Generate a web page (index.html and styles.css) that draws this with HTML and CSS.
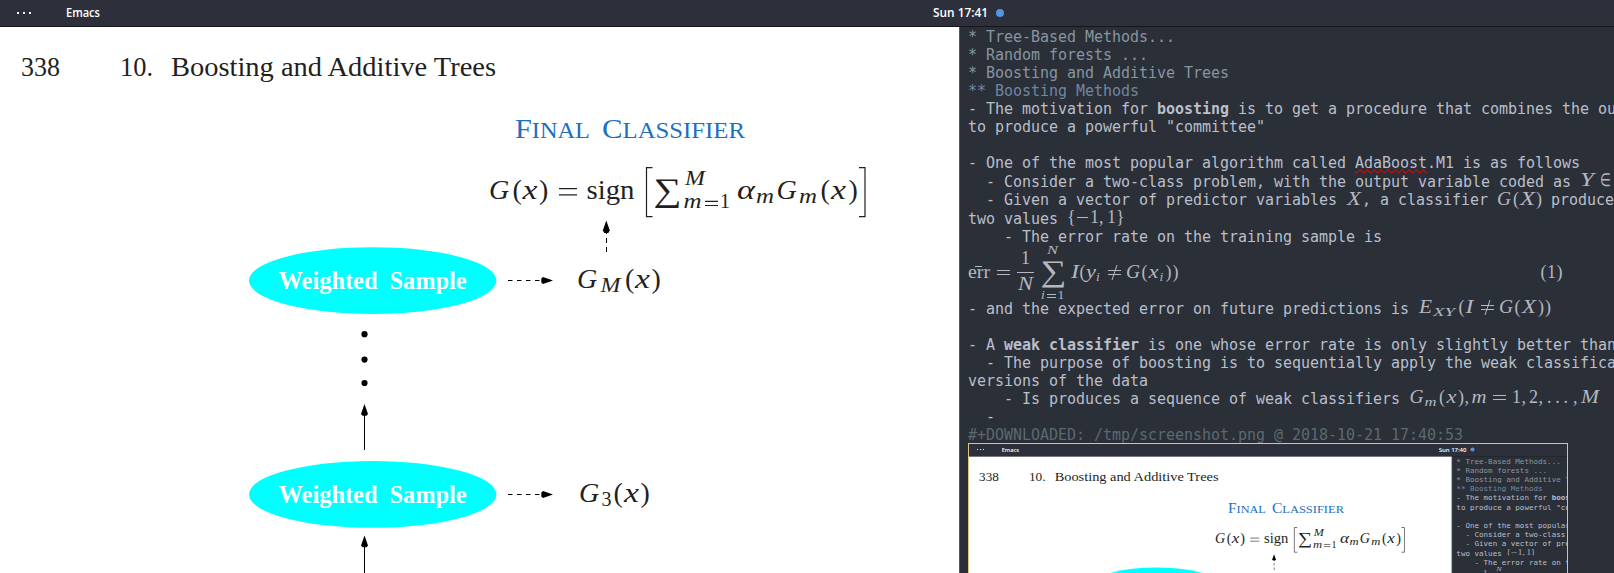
FILE: index.html
```html
<!DOCTYPE html>
<html lang="en">
<head>
<meta charset="utf-8">
<title>Emacs</title>
<link rel="stylesheet" href="styles.css">
</head>
<body>
<div class="screen" id="screen">
  <header class="topbar">
    <div class="topbar-left">
      <svg class="dots" width="15" height="2" viewBox="0 0 15 2"><path d="M0 0h2v2H0zM6 0h2v2H6zM12 0h2v2H12z"/></svg>
      <svg width="36" height="26"><text class="bar-text" x="0" y="17" textLength="34" lengthAdjust="spacingAndGlyphs">Emacs</text></svg>
    </div>
    <div class="clock">
      <svg width="56" height="26"><text class="bar-text" x="0" y="17" textLength="55" lengthAdjust="spacingAndGlyphs">Sun <tspan class="clock-time">17:41</tspan></text></svg>
      <span class="notify"></span>
    </div>
  </header>
  <main class="workspace">
    <section class="book">
      <svg class="figure" width="959" height="546" viewBox="0 27 959 546">
        <g class="run">
          <text x="21" y="75.900" textLength="39" lengthAdjust="spacingAndGlyphs">338</text>
          <text x="120" y="75.900" textLength="33" lengthAdjust="spacingAndGlyphs">10.</text>
          <text x="171" y="75.900" textLength="325" lengthAdjust="spacingAndGlyphs">Boosting and Additive Trees</text>
        </g>
        <g class="heading">
          <text x="515" y="138" textLength="75" lengthAdjust="spacingAndGlyphs">F<tspan class="sc">INAL</tspan></text>
          <text x="602" y="138" textLength="143" lengthAdjust="spacingAndGlyphs">C<tspan class="sc">LASSIFIER</tspan></text>
        </g>
        <g class="math">
          <text class="it" x="489" y="199">G</text><text x="512.500" y="199">(</text><text class="it" x="522.500" y="199" textLength="15" lengthAdjust="spacingAndGlyphs">x</text><text x="539" y="199">)</text>
          <path class="rule" d="M559 188.700h18M559 194.800h18"/>
          <text x="586.500" y="199" textLength="48" lengthAdjust="spacingAndGlyphs">sign</text>
          <path class="rule" d="M652.500 167.700h-6v49h6M859 167.700h6v49h-6"/>
          <text class="sum" x="653.500" y="200.500" textLength="28" lengthAdjust="spacingAndGlyphs">∑</text>
          <text class="it sub" x="685" y="185" textLength="20" lengthAdjust="spacingAndGlyphs">M</text>
          <text class="it sub" x="683.500" y="207.700" textLength="18" lengthAdjust="spacingAndGlyphs">m</text>
          <path class="rule" d="M705 201.300h13M705 205.500h13"/>
          <text class="sub" x="720" y="207.700">1</text>
          <text class="it" x="737" y="199" textLength="18" lengthAdjust="spacingAndGlyphs">α</text><text class="it sub" x="756" y="203" textLength="18" lengthAdjust="spacingAndGlyphs">m</text>
          <text class="it" x="776.500" y="199">G</text><text class="it sub" x="799" y="203" textLength="18" lengthAdjust="spacingAndGlyphs">m</text>
          <text x="820.500" y="199">(</text><text class="it" x="831" y="199" textLength="15" lengthAdjust="spacingAndGlyphs">x</text><text x="848.500" y="199">)</text>

          <text class="it" x="577" y="288">G</text><text class="it sub" x="600.500" y="292" textLength="20" lengthAdjust="spacingAndGlyphs">M</text><text x="625" y="288">(</text><text class="it" x="635" y="288" textLength="15" lengthAdjust="spacingAndGlyphs">x</text><text x="651.500" y="288">)</text>
          <text class="it" x="579" y="502">G</text><text class="sub" x="601.500" y="505.500">3</text><text x="613.500" y="502">(</text><text class="it" x="624" y="502" textLength="15" lengthAdjust="spacingAndGlyphs">x</text><text x="640.500" y="502">)</text>
        </g>
        <g class="nodes">
          <ellipse cx="372.700" cy="280.600" rx="123.700" ry="33.400"/>
          <ellipse cx="372.700" cy="494.400" rx="123.700" ry="33.400"/>
        </g>
        <g class="node-label">
          <text x="278.500" y="289.300" textLength="99" lengthAdjust="spacingAndGlyphs">Weighted</text>
          <text x="389.500" y="289.300" textLength="77" lengthAdjust="spacingAndGlyphs">Sample</text>
          <text x="278.500" y="503.200" textLength="99" lengthAdjust="spacingAndGlyphs">Weighted</text>
          <text x="389.500" y="503.200" textLength="77" lengthAdjust="spacingAndGlyphs">Sample</text>
        </g>
        <g class="arrows">
          <circle cx="364.500" cy="334.200" r="3.100"/><circle cx="364.500" cy="359.600" r="3.100"/><circle cx="364.500" cy="383" r="3.100"/>
          <path class="line" d="M364.500 412v38M364.500 543v32"/>
          <path d="M364.500 404l3.500 10-1.500 1.700h-4l-1.500-1.700zM364.500 535.500l3.500 10-1.500 1.700h-4l-1.500-1.700z"/>
          <path class="line dash" d="M508 280.500h36M508 494.500h36"/>
          <path d="M553 280.500l-10 3.500-1.700-1.500v-4l1.700-1.500zM553 494.500l-10 3.500-1.700-1.500v-4l1.700-1.500z"/>
          <path class="line" d="M606.500 232v2M606.500 238v5M606.500 247v5"/>
          <path d="M606.300 220.500l3.500 10-1.500 2.500h-4l-1.500-2.500z"/>
        </g>
      </svg>
    </section>
    <section class="editor">
      <div class="row h1">* Tree-Based Methods...</div>
      <div class="row h1">* Random forests ...</div>
      <div class="row h1">* Boosting and Additive Trees</div>
      <div class="row h2">** Boosting Methods</div>
      <div class="row">- The motivation for <b>boosting</b> is to get a procedure that combines the ou</div>
      <div class="row">to produce a powerful "committee"</div>
      <div class="row"></div>
      <div class="row">- One of the most popular algorithm called <span class="typo">AdaBoost</span>.M1 is as follows</div>
      <div class="row tall">  - Consider a two-class problem, with the output variable coded as <svg class="tex" width="34" height="18"><text class="it" x="0" y="12.700" textLength="14" lengthAdjust="spacingAndGlyphs">Y</text><text x="20" y="12.700" textLength="11" lengthAdjust="spacingAndGlyphs">∈</text></svg></div>
      <div class="row">  - Given a vector of predictor variables <svg class="tex" width="16" height="18"><text class="it" x="1" y="13.500" textLength="14" lengthAdjust="spacingAndGlyphs">X</text></svg>, a classifier <svg class="tex" width="45" height="18"><text class="it" x="0" y="13.500" textLength="14" lengthAdjust="spacingAndGlyphs">G</text><text x="16" y="13.500">(</text><text class="it" x="23" y="13.500" textLength="15" lengthAdjust="spacingAndGlyphs">X</text><text x="39" y="13.500">)</text></svg> produce</div>
      <div class="row tall">two values <svg class="tex" width="58" height="18"><text x="0" y="12.500">{</text><path d="M10 7.500h11"/><text x="23" y="12.500">1,</text><text x="40" y="12.500">1}</text></svg></div>
      <div class="row">    - The error rate on the training sample is</div>
      <div class="equation">
        <svg class="tex" width="600" height="54" viewBox="968 246 600 54">
          <text x="968" y="277.500" textLength="22" lengthAdjust="spacingAndGlyphs">err</text>
          <path d="M975 266.500h7M997 270.500h13M997 274.500h13M1017 272.500h17M1108 270.500h13M1108 274.500h13M1117 265l-5 15"/>
          <text x="1021" y="264">1</text><text class="it" x="1018" y="290" textLength="15" lengthAdjust="spacingAndGlyphs">N</text>
          <text class="sum" x="1040.500" y="280.500" textLength="26" lengthAdjust="spacingAndGlyphs">∑</text>
          <text class="it sub" x="1047" y="254.300" textLength="11" lengthAdjust="spacingAndGlyphs">N</text>
          <text class="it sub" x="1041" y="299">i</text><path d="M1047 294.500h9M1047 297.500h9"/><text class="sub" x="1057.500" y="299">1</text>
          <text class="it" x="1071" y="277.500" textLength="8" lengthAdjust="spacingAndGlyphs">I</text><text x="1079.500" y="277.500">(</text><text class="it" x="1086" y="277.500" textLength="10" lengthAdjust="spacingAndGlyphs">y</text><text class="it sub" x="1096" y="280.500">i</text>
          <text class="it" x="1126" y="277.500" textLength="14" lengthAdjust="spacingAndGlyphs">G</text><text x="1141.500" y="277.500">(</text><text class="it" x="1148.500" y="277.500" textLength="10" lengthAdjust="spacingAndGlyphs">x</text><text class="it sub" x="1159.500" y="280.500">i</text><text x="1165.500" y="277.500" textLength="13">))</text>
          <text x="1540.500" y="278" textLength="22">(1)</text>
        </svg>
      </div>
      <div class="row">- and the expected error on future predictions is <svg class="tex" width="140" height="18" viewBox="1418 300 140 18"><text class="it" x="1419" y="312.700" textLength="13" lengthAdjust="spacingAndGlyphs">E</text><text class="it sub" x="1433" y="316" textLength="22" lengthAdjust="spacingAndGlyphs">XY</text><text x="1458.500" y="312.700">(</text><text class="it" x="1465.500" y="312.700" textLength="8" lengthAdjust="spacingAndGlyphs">I</text><path d="M1481 305.500h13M1481 309.500h13M1490 300l-5 15"/><text class="it" x="1499" y="312.700" textLength="14" lengthAdjust="spacingAndGlyphs">G</text><text x="1514.500" y="312.700">(</text><text class="it" x="1522" y="312.700" textLength="14" lengthAdjust="spacingAndGlyphs">X</text><text x="1538" y="312.700" textLength="13">))</text></svg></div>
      <div class="row"></div>
      <div class="row">- A <b>weak classifier</b> is one whose error rate is only slightly better than</div>
      <div class="row">  - The purpose of boosting is to sequentially apply the weak classifica</div>
      <div class="row">versions of the data</div>
      <div class="row">    - Is produces a sequence of weak classifiers <svg class="tex" width="192" height="18" viewBox="1409 390 192 18"><text class="it" x="1409.500" y="402.700" textLength="14" lengthAdjust="spacingAndGlyphs">G</text><text class="it sub" x="1424.500" y="405.500" textLength="12" lengthAdjust="spacingAndGlyphs">m</text><text x="1439" y="402.700">(</text><text class="it" x="1446.500" y="402.700" textLength="10" lengthAdjust="spacingAndGlyphs">x</text><text x="1458" y="402.700">)</text><text x="1464.500" y="402.700">,</text><text class="it" x="1471.500" y="402.700" textLength="15" lengthAdjust="spacingAndGlyphs">m</text><path d="M1493 395.500h13M1493 399.500h13"/><text x="1512" y="402.700">1</text><text x="1521.500" y="402.700">,</text><text x="1529" y="402.700">2</text><text x="1538.500" y="402.700">,</text><text x="1547" y="402.700" textLength="21">...</text><text x="1573" y="402.700">,</text><text class="it" x="1581" y="402.700" textLength="18" lengthAdjust="spacingAndGlyphs">M</text></svg></div>
      <div class="row">  -</div>
      <div class="row short meta">#+DOWNLOADED: /tmp/screenshot.png @ 2018-10-21 17:40:53</div>
      <div class="shot" id="shot"></div>
    </section>
  </main>
</div>
<script src="script.js"></script>
</body>
</html>
```
FILE: styles.css
```css
body {
  margin: 0;
  overflow: hidden;
  background: #2b2f38;
}

.screen {
  width: 1614px;
  height: 573px;
  overflow: hidden;
  display: flex;
  flex-direction: column;
}

.topbar {
  flex: none;
  box-sizing: border-box;
  height: 27px;
  display: grid;
  grid-template-columns: 933px 1fr;
  background: #2d303b;
  border-bottom: 1px solid #14161c;
}

.topbar-left {
  display: flex;
  align-items: center;
  gap: 34px;
  padding-left: 17px;
}

.dots { fill: #fff; }

.bar-text {
  font: 600 12px "Open Sans", "Noto Sans", sans-serif;
  fill: #fff;
}

.clock {
  display: flex;
  align-items: center;
  gap: 7px;
}

.notify {
  width: 8px;
  height: 8px;
  border-radius: 50%;
  background: #5294e2;
}

.workspace {
  flex: 1;
  min-height: 0;
  display: grid;
  grid-template-columns: 959px 1fr;
}

.book {
  background: #fff;
  overflow: hidden;
}

.figure {
  display: block;
  font-family: "Liberation Serif", serif;
  fill: #231f20;
}

.run { font-size: 26.5px; }
.heading { font-size: 28px; fill: #1c70c0; }
.sc { font-size: 22.5px; }
.math { font-size: 28px; }
.it { font-style: italic; }
.math .sub { font-size: 20px; }
.math .sum { font-size: 33px; }
.rule { fill: none; stroke: #231f20; stroke-width: 1.2; }
.nodes { fill: #0ff; }
.node-label { font-size: 25px; font-weight: bold; fill: #fff; }
.arrows { fill: #000; }
.line { fill: none; stroke: #000; stroke-width: 1; }
.dash { stroke-dasharray: 4.500 4.500; }

.editor {
  box-sizing: border-box;
  padding: 1px 0 0 8px;
  border-left: 1px solid #55575e;
  background: #2b2f38;
  color: #b9bfcb;
  font: 15px/18px "DejaVu Sans Mono", monospace;
  letter-spacing: -0.031px;
  overflow: hidden;
}

.row {
  height: 18px;
  white-space: pre;
  display: flex;
}

.row.tall { height: 18px; padding-top: 1px; }
.row.short { height: 17px; }
.h1 { color: #8796a1; }
.h2 { color: #7186a0; }
.meta { color: #5a6a6f; }

.typo {
  text-decoration: underline wavy #ff0000 1px;
  text-underline-offset: 1px;
  text-decoration-skip-ink: none;
}

.tex {
  flex: none;
  overflow: visible;
  font-family: "Liberation Serif", serif;
  font-size: 18px;
  letter-spacing: 0;
  fill: #b4b8c0;
}

.tex path { fill: none; stroke: #b4b8c0; stroke-width: 1; }
.tex .sub { font-size: 13.5px; }
.tex .sum { font-size: 30px; }

.equation { height: 54px; }
.equation .tex { display: block; }

.shot {
  box-sizing: border-box;
  width: 600px;
  height: 340px;
  border: 1px solid #dcc67c;
  overflow: hidden;
}

.shot .screen {
  height: 680px;
  transform: translate(-0.5px, -1px) scale(0.504);
  transform-origin: 0 0;
}
```
FILE: script.js
```js
// The embedded screenshot repeats the desktop one minute earlier.
const shot = document.getElementById('shot');
const copy = document.getElementById('screen').cloneNode(true);
copy.removeAttribute('id');
copy.querySelector('.shot').remove();
copy.querySelector('.clock-time').textContent = '17:40';
shot.appendChild(copy);
```
